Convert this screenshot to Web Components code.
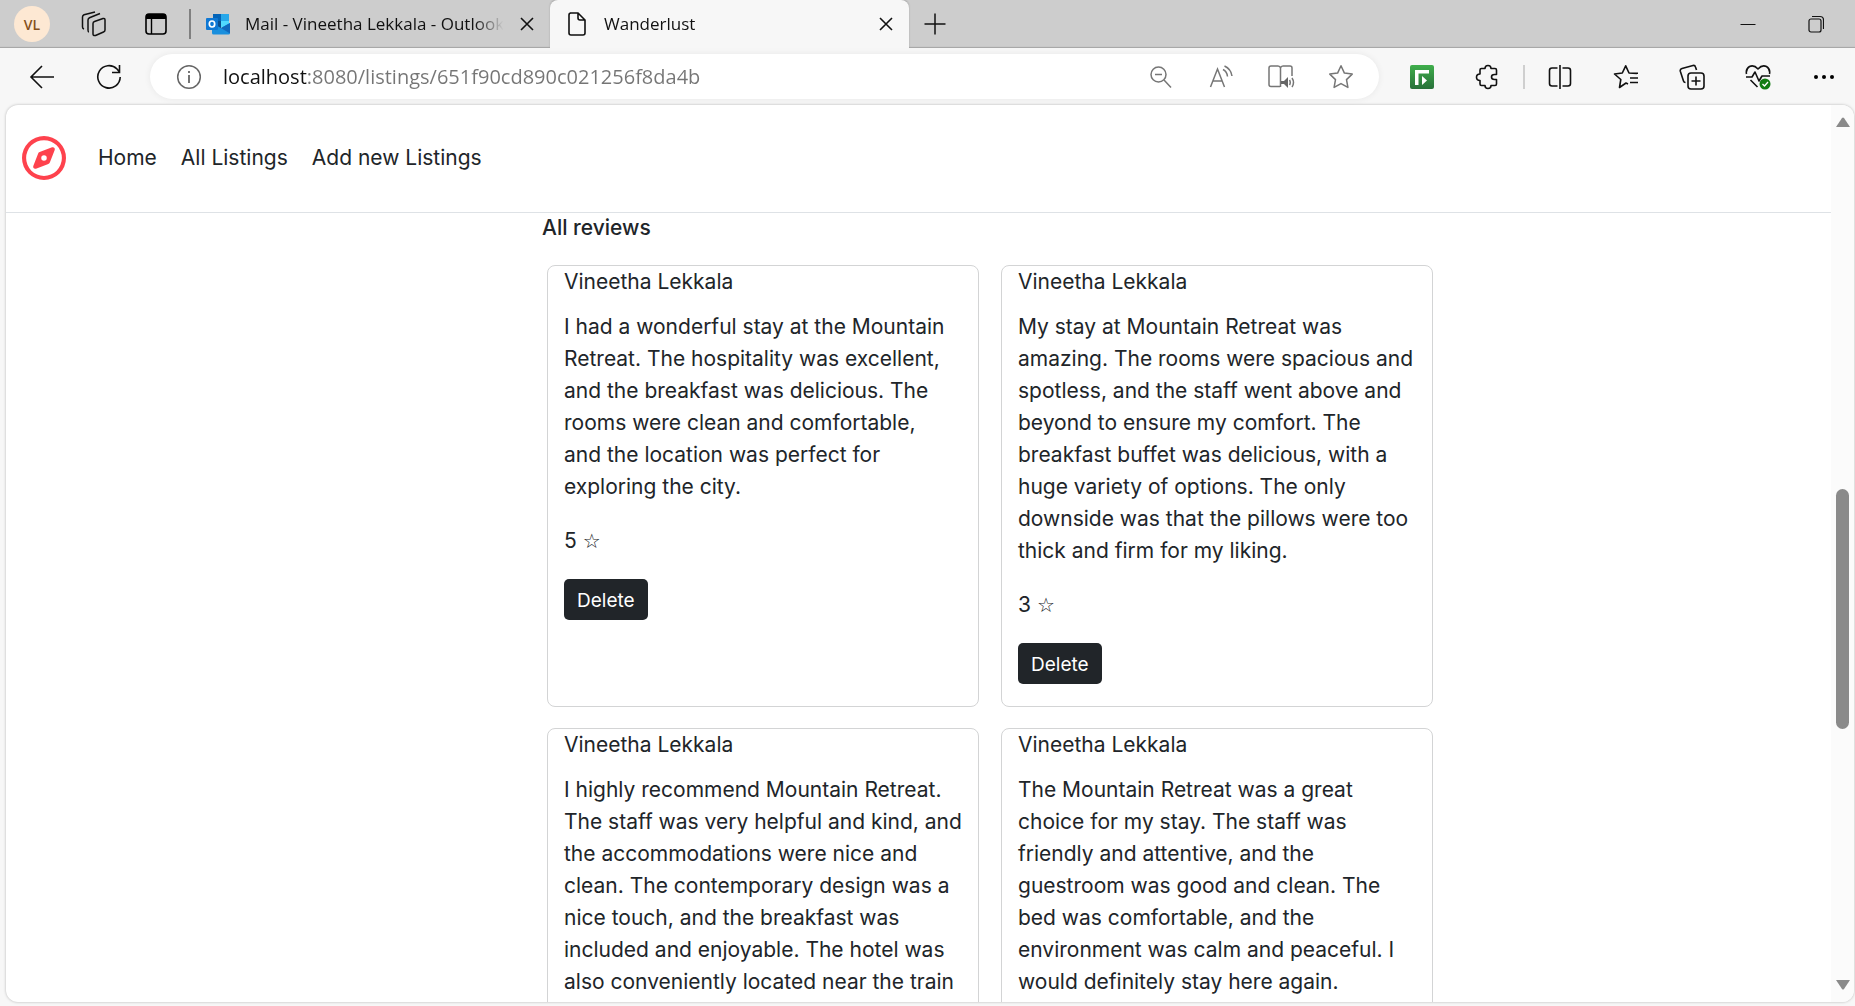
<!DOCTYPE html>
<html lang="en">
<head>
<meta charset="utf-8">
<title>Wanderlust</title>
<style>
html, body { height: 100%; margin: 0; }
body { overflow: hidden; background: #f7f7f7; font-family: Inter, "Liberation Sans", sans-serif; color: #212529; }
</style>
</head>
<body>
<browser-window>
  <tab-strip slot="tabs">
    <browser-tab>
      <svg slot="icon" width="24" height="24" viewBox="0 0 24 24"><path d="M7 2h16v8H7z" fill="#1490df"/><path d="M7 2h8v7H7z" fill="#0364b8"/><path d="M15 2h8v7h-8z" fill="#28a8ea"/><path d="M7 9h8v7H7z" fill="#0a4e8f"/><path d="M15 9h8v6h-8z" fill="#50d9ff"/><path d="M6 21V11l9 5 9-5v10a1.500 1.500 0 0 1-1.500 1.500h-15A1.500 1.500 0 0 1 6 21z" fill="#1a8fdd"/><path d="M15 16l9-5v10.500z" fill="#1168bd"/><rect x="0" y="6" width="12" height="12" rx="1" fill="#0f78d4"/><ellipse cx="6" cy="12" rx="2.700" ry="3" fill="none" stroke="#fff" stroke-width="1.700"/></svg>
      Mail - Vineetha Lekkala - Outlook
    </browser-tab>
    <browser-tab active>
      <svg slot="icon" width="24" height="24" viewBox="0 0 24 24" fill="none" stroke="#111" stroke-width="1.600"><path d="M5 1h8l7 7v13a2 2 0 0 1-2 2H6a2 2 0 0 1-2-2V3a2 2 0 0 1 2-2zM13 1v5a2 2 0 0 0 2 2h5"/></svg>
      Wanderlust
    </browser-tab>
  </tab-strip>
  <address-bar slot="toolbar"></address-bar>
  <site-nav></site-nav>
  <review-list heading="All reviews">
    <review-card author="Vineetha Lekkala" rating="5">I had a wonderful stay at the Mountain<br>Retreat. The hospitality was excellent,<br>and the breakfast was delicious. The<br>rooms were clean and comfortable,<br>and the location was perfect for<br>exploring the city.</review-card>
    <review-card author="Vineetha Lekkala" rating="3">My stay at Mountain Retreat was<br>amazing. The rooms were spacious and<br>spotless, and the staff went above and<br>beyond to ensure my comfort. The<br>breakfast buffet was delicious, with a<br>huge variety of options. The only<br>downside was that the pillows were too<br>thick and firm for my liking.</review-card>
    <review-card author="Vineetha Lekkala">I highly recommend Mountain Retreat.<br>The staff was very helpful and kind, and<br>the accommodations were nice and<br>clean. The contemporary design was a<br>nice touch, and the breakfast was<br>included and enjoyable. The hotel was<br>also conveniently located near the train</review-card>
    <review-card author="Vineetha Lekkala">The Mountain Retreat was a great<br>choice for my stay. The staff was<br>friendly and attentive, and the<br>guestroom was good and clean. The<br>bed was comfortable, and the<br>environment was calm and peaceful. I<br>would definitely stay here again.</review-card>
  </review-list>
</browser-window>
<script>
const define = (name, html, setup) => {
  const template = document.createElement('template');
  template.innerHTML = `<style>:host,*{box-sizing:border-box}button{font:inherit;color:inherit;background:none;border:0;padding:0;margin:0;display:flex;align-items:center;justify-content:center}svg{display:block;flex:none}</style>` + html;
  customElements.define(name, class extends HTMLElement {
    constructor() {
      super();
      this.attachShadow({ mode: 'open' }).append(template.content.cloneNode(true));
    }
    connectedCallback() { if (setup) setup(this, this.shadowRoot); }
  });
};

define('browser-window', `
<style>
:host { display: flex; flex-direction: column; height: 100vh; }
.page { flex: 1; min-height: 0; display: flex; margin: 0 1px 4px 6px; background: #fff; border-radius: 12px; overflow: hidden; box-shadow: 0 0 3px #0004; }
.view { flex: 1; min-width: 0; overflow: hidden; }
</style>
<slot name="tabs"></slot>
<slot name="toolbar"></slot>
<div class="page"><main class="view"><slot></slot></main><scroll-rail></scroll-rail></div>`);

define('scroll-rail', `
<style>
:host { display: flex; flex-direction: column; align-items: center; justify-content: space-between; width: 23px; padding: 12px 0; background: #fbfbfb; }
.track { flex: 1; width: 13px; display: flex; flex-direction: column; }
.before { flex: 364; } .thumb { flex: 241; background: #8a8a8a; border-radius: 7px; } .after { flex: 252; }
</style>
<svg width="14" height="10" viewBox="0 0 14 10"><path d="M0 10L6 1q1-1 2 0l6 9z" fill="#8a8a8a"/></svg>
<div class="track"><div class="before"></div><div class="thumb"></div><div class="after"></div></div>
<svg width="14" height="10" viewBox="0 0 14 10"><path d="M0 0l6 9q1 1 2 0l6-9z" fill="#8a8a8a"/></svg>`);

define('tab-strip', `
<style>
:host { display: flex; align-items: stretch; flex: none; height: 48px; padding-left: 1px; background: #cdcdcd; color: #111; box-shadow: inset 0 -2px 1px -1px #0003; }
button { width: 62px; }
.avatar span { display: flex; align-items: center; justify-content: center; width: 36px; height: 36px; border-radius: 50%; background: #fde8d3; color: #84501c; font: 600 14px "Open Sans", sans-serif; }
.rule { align-self: center; width: 2px; height: 30px; margin-left: 2px; background: #808080; }
.new { width: 52px; }
.space { flex: 1; }
.win { width: 68px; }
.end { width: 5px; }
</style>
<button class="avatar" aria-label="Profile"><span>VL</span></button>
<button aria-label="Workspaces"><svg width="26" height="26" viewBox="0 0 26 26" fill="none" stroke="#111" stroke-width="1.500" stroke-linejoin="round"><path d="M12 12.500q0-1.500 1.500-2l8.500-3q2-.5 2 1.500v10q0 1.500-1.500 2l-8 3.500q-2.500.5-2.500-1.500zM8 21q-1 0-1-2V9q0-1.500 1.500-2.200L19 2.500M3 18q-1.500-.5-1.500-2V6q0-1.500 1.500-2.200L14 1"/></svg></button>
<button aria-label="Tab actions"><svg width="24" height="24" viewBox="0 0 24 24"><rect x="2" y="2" width="20" height="20" rx="3" fill="none" stroke="#000" stroke-width="1.600"/><path d="M2 7V4q0-2 2-2h16q2 0 2 2v3z" fill="#000"/><path d="M7.500 7v15" stroke="#000" stroke-width="1.400"/></svg></button>
<div class="rule"></div>
<slot></slot>
<button class="new" aria-label="New tab"><svg width="22" height="22" viewBox="0 0 22 22"><path d="M11 .5v21M.5 11h21" stroke="#111" stroke-width="1.500"/></svg></button>
<div class="space"></div>
<button class="win" aria-label="Minimize"><svg width="16" height="16" viewBox="0 0 16 16"><path d="M.5 8.500h15" stroke="#111"/></svg></button>
<button class="win" aria-label="Restore"><svg width="16" height="22" viewBox="0 0 16 22" fill="none" stroke="#111" stroke-width="1.200"><rect x="1" y="6" width="12" height="13" rx="2"/><path d="M4 3.500h8q3.500 0 3.500 3.500v9"/></svg></button>
<div class="end"></div>`);

define('browser-tab', `
<style>
:host { display: flex; align-items: center; gap: 15px; width: 359px; padding: 0 11px 0 15px; font: 17px "Open Sans", sans-serif; }
:host([active]) { background: #f7f7f7; border-radius: 8px 8px 0 0; box-shadow: 0 -1px 2px #0003; clip-path: inset(-4px -4px 0 -4px); }
.title { flex: 1; min-width: 0; overflow: hidden; white-space: nowrap; height: 24px; line-height: 24px; margin-right: -6px; -webkit-mask-image: linear-gradient(90deg, #000 88%, transparent 99%); mask-image: linear-gradient(90deg, #000 88%, transparent 99%); }
button { width: 24px; height: 24px; }
</style>
<slot name="icon"></slot><span class="title"><slot></slot></span>
<button aria-label="Close tab"><svg width="14" height="14" viewBox="0 0 14 14"><path d="M1 1l12 12M13 1L1 13" stroke="#111" stroke-width="1.600"/></svg></button>`);

define('address-bar', `
<style>
:host { display: flex; align-items: center; flex: none; gap: 8px; height: 57px; padding-left: 8px; color: #111; }
.group { display: flex; align-items: center; }
.group button { width: 67px; height: 44px; }
.group.tools { margin: 0 -2px 0 2px; }
.tools button { width: 66px; }
.rule { width: 2px; height: 24px; margin: 0 2px; background: #cfcfcf; }
.box { flex: 1; min-width: 0; display: flex; align-items: center; height: 45px; padding: 0 8px; border-radius: 23px; background: #fff; box-shadow: 0 0 7px #0001; color: #767676; }
.box button { width: 60px; height: 44px; }
.box .info { width: 62px; }
.field { flex: 1; min-width: 0; display: flex; }
input { flex: 1; min-width: 0; border: 0; outline: 0; padding: 0 3px; height: 32px; font: 20px "Open Sans", sans-serif; color: transparent; background: linear-gradient(90deg, #111 88px, #757575 88px); -webkit-background-clip: text; background-clip: text; }
</style>
<div class="group">
<button aria-label="Back"><svg width="26" height="24" viewBox="0 0 26 24" fill="none" stroke="#111" stroke-width="1.600"><path d="M13 1L2 12l11 11M2 12h23"/></svg></button>
<button aria-label="Refresh"><svg width="26" height="26" viewBox="0 0 26 26" fill="none" stroke="#111" stroke-width="1.600"><path d="M24.200 13A11.200 11.200 0 1 1 21 5l2.500 3M23.500 1v7.500h-7.500"/></svg></button>
</div>
<div class="box">
<button class="info" aria-label="Site information"><svg width="26" height="26" viewBox="0 0 26 26"><circle cx="13" cy="13" r="11.300" fill="none" stroke="#666" stroke-width="1.500"/><path d="M13 11v8M13 7v2" stroke="#666" stroke-width="1.800"/></svg></button>
<div class="field"><input aria-label="Address" value="localhost:8080/listings/651f90cd890c021256f8da4b"></div>
<button aria-label="Zoom"><svg width="24" height="24" viewBox="0 0 24 24" fill="none" stroke="#767676" stroke-width="1.500"><circle cx="9.500" cy="9.500" r="7.500"/><path d="M6 9.500h7M15 15l7 7.500"/></svg></button>
<button aria-label="Read aloud"><svg width="24" height="24" viewBox="0 0 24 24" fill="none" stroke="#767676" stroke-width="1.500"><path d="M1.500 22L8.500 4l7 18M4 16h9M14 4.500q4 2 4.500 7M15.500 1q6.500 3 7.500 10"/></svg></button>
<button aria-label="Immersive reader"><svg width="28" height="26" viewBox="0 0 28 26" fill="none" stroke="#767676" stroke-width="1.500"><path d="M13 22.500H4q-2 0-2-2V4q0-2 2-2h7q2 0 2.500 2Q14 2 16 2h7q2 0 2 2v8M13.500 3v20"/><path d="M14 17h3l4-4v11l-4-4h-3z" fill="#666" stroke="none"/><path d="M22.500 16q1.500 2.500 0 5M25 14q3 4.500 0 9"/></svg></button>
<button aria-label="Favorite"><svg width="26" height="26" viewBox="0 0 26 26" fill="none" stroke="#767676" stroke-width="1.500" stroke-linejoin="round"><path d="M13 1.800l3.400 7.300 7.800 1-5.700 5.500 1.400 7.800-6.900-3.800-6.900 3.800 1.400-7.800L1.800 10.100l7.800-1z"/></svg></button>
</div>
<div class="group tools">
<button aria-label="Extension"><svg width="24" height="24" viewBox="0 0 24 24"><defs><linearGradient id="g" x2="0" y2="1"><stop stop-color="#3fae4b"/><stop offset="1" stop-color="#28713a"/></linearGradient></defs><rect width="24" height="24" rx="2" fill="url(#g)"/><path d="M5 5h14v3.500H8.500V20H5z" fill="#fff"/><path d="M12 11l5 4.500-5 4.500z" fill="#fff"/></svg></button>
<button aria-label="Extensions"><svg width="26" height="26" viewBox="0 0 26 26" fill="none" stroke="#111" stroke-width="1.600" stroke-linejoin="round"><path d="M5 6q0-1.500 1.500-1.500H10q0-3 3-3t3 3h4q1.500 0 1.500 1.500v4.500h-2q-3 0-3 2.500t3 2.500h2V20q0 1.500-1.500 1.500h-4q0 3-3 3t-3-3H6.500Q5 21.500 5 20v-3.500q-3.500 0-3.500-3.200T5 10z"/></svg></button>
<span class="rule"></span>
<button aria-label="Split screen"><svg width="26" height="26" viewBox="0 0 26 26" fill="none" stroke="#111" stroke-width="1.600"><path d="M10.500 4H5Q2.500 4 2.500 6.500v13Q2.500 22 5 22h5.500M15.500 4H21q2.500 0 2.500 2.500v13Q23.500 22 21 22h-5.500M13 1v24"/></svg></button>
<button aria-label="Favorites"><svg width="26" height="26" viewBox="0 0 26 26" fill="none" stroke="#111" stroke-width="1.600" stroke-linejoin="round"><path d="M15 20l-2-1-6.500 4.500 1.300-8L1.500 10l7.800-1L12.700 1.800 16 9l8 .5M17 14h8M17 18.500h8M17 9.200h8"/></svg></button>
<button aria-label="Collections"><svg width="26" height="26" viewBox="0 0 26 26" fill="none" stroke="#111" stroke-width="1.600" stroke-linejoin="round"><rect x="9" y="9" width="16" height="16" rx="3"/><path d="M17 12.500v9M12.500 17h9M17.500 6l-1-3q-.6-2-2.500-1.500L3 4.500Q.8 5.200 1.300 7.200L4.500 17q.4 1.500 2 1.500"/></svg></button>
<button aria-label="Browser essentials"><svg width="28" height="26" viewBox="0 0 28 26" fill="none" stroke="#111" stroke-width="1.600" stroke-linejoin="round"><path d="M2.500 10Q1.500 5 5.500 2.500 10 .5 14 5q4-4.500 8.500-2.500Q26.500 5 25.500 10M2 13h6l3-5 4 9 3-5h8M6.500 16l7 7"/><circle cx="21" cy="20" r="5.500" fill="#107c10" stroke="none"/><path d="M18.500 20l2 2 3.500-4" stroke="#fff" stroke-width="1.300"/></svg></button>
<button aria-label="Settings and more"><svg width="22" height="6" viewBox="0 0 22 6"><circle cx="3" cy="3" r="2"/><circle cx="11" cy="3" r="2"/><circle cx="19" cy="3" r="2"/></svg></button>
</div>`);

define('site-nav', `
<style>
:host { display: block; border-bottom: 1px solid #dee2e6; }
nav { display: flex; align-items: center; height: 107px; padding: 0 0 2px 16px; font-size: 21px; }
.brand { margin-right: 32px; }
.links { display: flex; gap: 24px; }
a { color: #212529; text-decoration: none; line-height: 32px; }
</style>
<nav>
<a class="brand" href="#" aria-label="Wanderlust"><svg width="44" height="44" viewBox="0 0 512 512" fill="#fe424d"><path d="M464 256A208 208 0 1 0 48 256a208 208 0 1 0 416 0zM0 256a256 256 0 1 1 512 0A256 256 0 1 1 0 256zm306.700 69.100L162.400 380.600c-19.400 7.500-38.500-11.600-31-31l55.500-144.300c3.300-8.500 9.900-15.100 18.400-18.400l144.300-55.500c19.400-7.500 38.500 11.600 31 31L325.100 306.700c-3.200 8.500-9.900 15.100-18.400 18.400zM288 256a32 32 0 1 0-64 0 32 32 0 1 0 64 0z"/></svg></a>
<div class="links"><a href="#">Home</a><a href="#">All Listings</a><a href="#">Add new Listings</a></div>
</nav>`);

define('review-list', `
<style>
:host { display: grid; grid-template-columns: 536fr 891fr 398fr; }
section { grid-column: 2; }
h2 { margin: 0 0 24px; padding-top: 2px; font-size: 21px; font-weight: 500; line-height: 26px; }
.cards { display: grid; grid-template-columns: 1fr 1fr; grid-auto-rows: minmax(300px, auto); gap: 21px 22px; padding: 0 0 0 5px; }
</style>
<section><h2></h2><div class="cards"><slot></slot></div></section>`,
(host, root) => { root.querySelector('h2').textContent = host.getAttribute('heading'); });

define('review-card', `
<style>
:host { display: block; border: 1px solid #d3d4d5; border-radius: 8px; padding: 0 16px 22px; font-size: 21px; line-height: 32px; }
h3 { margin: 0 0 13px; font: inherit; }
p { margin: 0 0 22px; white-space: nowrap; }
.star { font-family: "DejaVu Sans", sans-serif; font-size: 20px; line-height: 20px; }
.actions button { height: 41px; padding: 2px 13px 0; border-radius: 5px; background: #212529; color: #fff; font-size: 19px; font-weight: 400; }
</style>
<h3></h3><p><slot></slot></p>
<div class="actions"><p><span class="value"></span> <span class="star">☆</span></p><button>Delete</button></div>`,
(host, root) => {
  root.querySelector('h3').textContent = host.getAttribute('author');
  if (host.hasAttribute('rating')) root.querySelector('.value').textContent = host.getAttribute('rating');
  else root.querySelector('.actions')?.remove();
});
</script>
</body>
</html>
